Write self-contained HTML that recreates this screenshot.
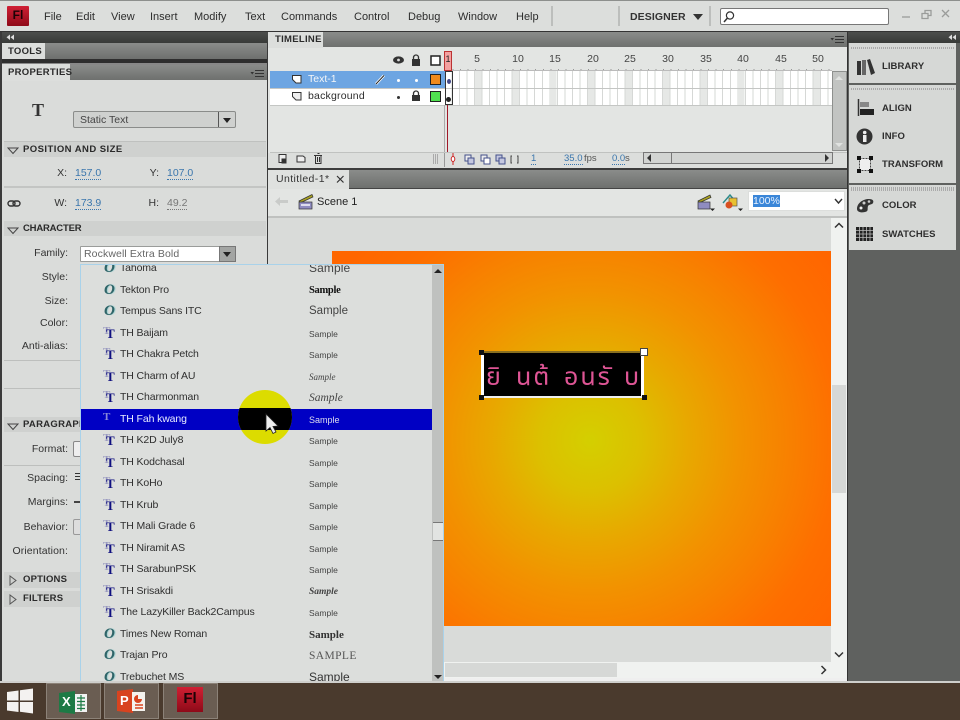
<!DOCTYPE html>
<html><head><meta charset="utf-8"><style>
*{box-sizing:border-box}
html,body{margin:0;padding:0;width:960px;height:720px;overflow:hidden;background:#dcdedc}
body{position:relative;font:10.5px "Liberation Sans","DejaVu Sans",sans-serif;color:#333;filter:blur(.3px)}
.a{position:absolute;white-space:nowrap}
.m{top:10px;font-size:11px;color:#2d2d2d;line-height:14px}
.hd{background:linear-gradient(#8a8c8a,#6e706e)}
.tab{background:#dcdedc;font-weight:bold;font-size:9.5px;color:#2b2b2b;line-height:17px;letter-spacing:.3px}
.sec{left:4px;width:262px;background:#cfd1cf;font-weight:bold;font-size:9.5px;color:#2a2a2a;line-height:16px;height:16px;padding-left:19px;letter-spacing:.2px}
.lab{font-size:10.5px;color:#333;text-align:right;line-height:14px}
.blue{color:#3a76ad;border-bottom:1px dotted #3a76ad;line-height:12px;font-size:10.5px}
.num{top:53px;font-size:10.5px;color:#444;width:20px;text-align:center;line-height:13px}
.rp{left:882px;font-weight:bold;font-size:9.5px;color:#2e2e2e;line-height:12px;letter-spacing:.05px}
.th{position:absolute;top:9px;line-height:32px;font-family:'Noto Sans Thai','Loma','Norasi','Garuda','DejaVu Sans','Liberation Sans',sans-serif;font-size:25px;color:#de5595;letter-spacing:2px}
#dd{left:80px;top:264px;width:364px;height:418px;background:#dcdedc;border:1px solid #a9d2ea;overflow:hidden}
.r{position:absolute;left:0;width:351px;height:21.5px;color:#2f2f2f;font-size:10.5px}
.r .n{position:absolute;left:39px;top:3px;line-height:15px;letter-spacing:-.12px}
.r .s{position:absolute;left:228px;top:4px;line-height:14px;font-size:8.5px;color:#444}
.r .o{position:absolute;left:23px;top:2px;font:italic bold 15px "Liberation Serif",serif;color:#2f6468;line-height:16px;text-shadow:1px 0 1px #9cc}
.r .t1{position:absolute;left:22px;top:2px;font:bold 11px "Liberation Serif",serif;color:#9a9ac0;line-height:13px}
.r .t2{position:absolute;left:25px;top:4px;font:bold 13px "Liberation Serif",serif;color:#101080;line-height:14px}
</style></head><body>

<!-- top bar -->
<div class="a" style="left:0;top:0;width:960px;height:1px;background:#8d8f8d"></div>
<div class="a" style="left:7px;top:6px;width:22px;height:20px;background:linear-gradient(#d02035,#8e0a18);border-radius:1px;color:#1c0206;font-weight:bold;font-size:12px;line-height:19px;text-align:center">Fl</div>
<div class="a m" style="left:44px">File</div>
<div class="a m" style="left:76px">Edit</div>
<div class="a m" style="left:111px">View</div>
<div class="a m" style="left:150px">Insert</div>
<div class="a m" style="left:194px">Modify</div>
<div class="a m" style="left:245px">Text</div>
<div class="a m" style="left:281px">Commands</div>
<div class="a m" style="left:354px">Control</div>
<div class="a m" style="left:408px">Debug</div>
<div class="a m" style="left:458px">Window</div>
<div class="a m" style="left:516px">Help</div>
<div class="a" style="left:551px;top:6px;width:2px;height:20px;background:#bcbebc"></div>
<div class="a" style="left:618px;top:6px;width:2px;height:20px;background:#bcbebc"></div>
<div class="a" style="left:630px;top:10px;font-size:10.5px;font-weight:bold;color:#333;line-height:14px;letter-spacing:.1px">DESIGNER</div>
<div class="a" style="left:693px;top:14px;border:5px solid transparent;border-top:6px solid #333;border-bottom:0"></div>
<div class="a" style="left:709px;top:6px;width:2px;height:20px;background:#bcbebc"></div>
<div class="a" style="left:720px;top:8px;width:169px;height:17px;background:#fff;border:1px solid #777;border-radius:2px"></div>
<svg class="a" style="left:722px;top:10px" width="14" height="14"><circle cx="8" cy="5.5" r="3.6" fill="none" stroke="#333" stroke-width="1.2"/><path d="M5.5 8L2 12" stroke="#333" stroke-width="1.5"/></svg>
<svg class="a" style="left:900px;top:8px" width="50" height="14" fill="none" stroke="#9a9c9a" stroke-width="1.3"><path d="M2 9H10"/><path d="M22 5.5h6v5h-6zM25 5V2.5h6v5h-3"/><path d="M42 2L49 9M49 2L42 9"/></svg>
<div class="a" style="left:0;top:31px;width:960px;height:1px;background:#333"></div>

<!-- left panel -->
<div class="a" style="left:0;top:32px;width:268px;height:650px;background:#dadcda"></div>
<div class="a" style="left:0;top:32px;width:2px;height:650px;background:#3a3a3a"></div>
<div class="a" style="left:267px;top:32px;width:1px;height:650px;background:#3a3a3a"></div>
<div class="a" style="left:2px;top:32px;width:266px;height:11px;background:linear-gradient(#4c4e4c,#383a38)"></div>
<svg class="a" style="left:6px;top:34px" width="8" height="7" fill="#ddd"><path d="M4 0.5V6L0.5 3.2zM8 0.5V6L4.5 3.2z"/></svg>
<div class="a hd" style="left:2px;top:43px;width:265px;height:16px"></div>
<div class="a tab" style="left:2px;top:43px;width:43px;height:16px;padding-left:6px">TOOLS</div>
<div class="a" style="left:2px;top:59px;width:265px;height:4px;background:#2e2e2e"></div>
<div class="a hd" style="left:2px;top:65px;width:265px;height:15px"></div>
<div class="a" style="left:2px;top:63px;width:265px;height:2px;background:#888"></div>
<div class="a tab" style="left:2px;top:64px;width:68px;height:17px;padding-left:6px">PROPERTIES</div>
<svg class="a" style="left:250px;top:69px" width="15" height="9" fill="none" stroke="#333"><path d="M5 1.5H14M5 4.5H14M5 7.5H14" stroke-width="1"/><path d="M0.5 3H4L2.2 5.5z" fill="#333" stroke="none"/></svg>
<div class="a" style="left:32px;top:100px;font:bold 18px 'Liberation Serif',serif;color:#333;line-height:20px">T</div>
<div class="a" style="left:73px;top:111px;width:163px;height:17px;background:#cfd1cf;border:1px solid #8a8c8a;border-radius:2px;padding-left:6px;line-height:16px;font-size:10.5px;color:#444">Static Text</div>
<div class="a" style="left:218px;top:112px;width:1px;height:15px;background:#555"></div>
<div class="a" style="left:223px;top:118px;border:4px solid transparent;border-top:5px solid #222;border-bottom:0"></div>

<div class="a" style="left:4px;top:141px;width:262px;height:1px;background:#bfc1bf"></div>
<div class="a sec" style="top:142px;height:15px;line-height:15px;letter-spacing:.45px">POSITION AND SIZE</div>
<svg class="a" style="left:7px;top:147px" width="12" height="8" fill="none" stroke="#444"><path d="M1 1H11L6 6.5z"/></svg>
<div class="a lab" style="left:40px;top:166px;width:27px">X:</div>
<div class="a blue" style="left:75px;top:167px">157.0</div>
<div class="a lab" style="left:130px;top:166px;width:29px">Y:</div>
<div class="a blue" style="left:167px;top:167px">107.0</div>
<div class="a" style="left:4px;top:186px;width:262px;height:2px;background:#c3c5c3"></div>
<svg class="a" style="left:7px;top:199px" width="16" height="9" fill="none" stroke="#333" stroke-width="1.4"><rect x="1" y="2" width="7" height="5" rx="2.5"/><rect x="6" y="2" width="7" height="5" rx="2.5"/></svg>
<div class="a lab" style="left:40px;top:196px;width:27px">W:</div>
<div class="a blue" style="left:75px;top:197px">173.9</div>
<div class="a lab" style="left:130px;top:196px;width:29px">H:</div>
<div class="a" style="left:167px;top:197px;color:#777;border-bottom:1px dotted #777;line-height:12px;font-size:10.5px">49.2</div>
<div class="a sec" style="top:221px;height:15px;line-height:15px;letter-spacing:-.2px">CHARACTER</div>
<svg class="a" style="left:7px;top:227px" width="12" height="8" fill="none" stroke="#444"><path d="M1 1H11L6 6.5z"/></svg>
<div class="a lab" style="left:20px;top:246px;width:48px">Family:</div>
<div class="a" style="left:80px;top:246px;width:156px;height:16px;background:#fff;border:1px solid #9a9c9a;border-radius:1px;padding-left:3px;line-height:14px;color:#666;font-size:10.5px;letter-spacing:.1px">Rockwell Extra Bold</div>
<div class="a" style="left:219px;top:246px;width:17px;height:16px;background:#a3a5a3;border:1px solid #777"></div>
<div class="a" style="left:223px;top:252px;border:4px solid transparent;border-top:5px solid #222;border-bottom:0"></div>
<div class="a lab" style="left:20px;top:270px;width:48px">Style:</div>
<div class="a lab" style="left:20px;top:294px;width:48px">Size:</div>
<div class="a lab" style="left:20px;top:316px;width:48px">Color:</div>
<div class="a lab" style="left:10px;top:339px;width:58px">Anti-alias:</div>
<div class="a" style="left:4px;top:360px;width:76px;height:1px;background:#bdbfbd"></div>
<div class="a" style="left:4px;top:388px;width:76px;height:1px;background:#bdbfbd"></div>
<div class="a sec" style="top:417px;width:76px;height:15px;line-height:15px;overflow:hidden;letter-spacing:.3px">PARAGRAPH</div>
<svg class="a" style="left:7px;top:423px" width="12" height="8" fill="none" stroke="#444"><path d="M1 1H11L6 6.5z"/></svg>
<div class="a lab" style="left:20px;top:442px;width:48px">Format:</div>
<div class="a" style="left:73px;top:441px;width:10px;height:16px;background:#eee;border:1px solid #888;border-radius:2px"></div>
<div class="a" style="left:4px;top:465px;width:76px;height:1px;background:#bdbfbd"></div>
<div class="a lab" style="left:20px;top:471px;width:48px">Spacing:</div>
<div class="a" style="left:75px;top:473px;width:5px;height:7px;background:repeating-linear-gradient(#333 0 1px,transparent 1px 3px)"></div>
<div class="a lab" style="left:20px;top:495px;width:48px">Margins:</div>
<div class="a" style="left:74px;top:501px;width:6px;height:2px;background:#444"></div>
<div class="a lab" style="left:15px;top:520px;width:53px">Behavior:</div>
<div class="a" style="left:73px;top:519px;width:10px;height:16px;background:#ddd;border:1px solid #999;border-radius:2px"></div>
<div class="a lab" style="left:6px;top:544px;width:62px;letter-spacing:.1px">Orientation:</div>
<div class="a sec" style="top:572px;width:76px;height:16px;line-height:16px">OPTIONS</div>
<svg class="a" style="left:9px;top:575px" width="9" height="12" fill="none" stroke="#555"><path d="M1 1V10L7 5.5z"/></svg>
<div class="a sec" style="top:591px;width:76px;height:16px;line-height:16px">FILTERS</div>
<svg class="a" style="left:9px;top:594px" width="9" height="12" fill="none" stroke="#555"><path d="M1 1V10L7 5.5z"/></svg>

<!-- timeline -->
<div class="a" style="left:268px;top:32px;width:580px;height:137px;background:#e3e5e3"></div>
<div class="a hd" style="left:268px;top:32px;width:579px;height:15px"></div>
<div class="a tab" style="left:268px;top:32px;width:55px;height:16px;padding-left:7px;line-height:16px">TIMELINE</div>
<svg class="a" style="left:830px;top:35px" width="15" height="9" fill="none" stroke="#333"><path d="M5 1.5H14M5 4.5H14M5 7.5H14"/><path d="M0.5 3H4L2.2 5.5z" fill="#333" stroke="none"/></svg>
<div class="a" style="left:270px;top:71px;width:175px;height:17px;background:#6da5e2"></div>
<div class="a" style="left:270px;top:88px;width:175px;height:17px;background:#fff"></div>
<div class="a" style="left:270px;top:88px;width:562px;height:1px;background:#c4c6c4"></div>
<div class="a" style="left:270px;top:105px;width:562px;height:1px;background:#c4c6c4"></div>
<div class="a" style="left:445px;top:71px;width:387px;height:34px;background:repeating-linear-gradient(90deg,#fff 0,#fff 6.52px,#d6d8d6 6.52px,#d6d8d6 7.52px)"></div>
<div class="a" style="left:475px;top:71px;width:357px;height:34px;background:repeating-linear-gradient(90deg,#e6e8e6 0,#e6e8e6 6.5px,transparent 6.5px,transparent 37.6px)"></div>
<div class="a" style="left:445px;top:88px;width:387px;height:1px;background:#c4c6c4"></div>
<div class="a" style="left:445px;top:69px;width:387px;height:2px;background:repeating-linear-gradient(90deg,#999 0,#999 1px,transparent 1px,transparent 7.52px)"></div>
<div class="a" style="left:445px;top:70px;width:387px;height:1px;background:#bbb"></div>
<svg class="a" style="left:392px;top:54px" width="50" height="13"><ellipse cx="6.5" cy="6" rx="5.5" ry="3.6" fill="#333"/><circle cx="6.5" cy="6" r="1.4" fill="#ddd"/><rect x="20" y="5" width="8" height="7" fill="#333"/><path d="M21.5 5V3.5a2.5 2.5 0 015 0V5" fill="none" stroke="#333" stroke-width="1.3"/><rect x="39" y="2" width="9" height="9" fill="#fff" stroke="#222" stroke-width="1.5"/></svg>
<div class="a" style="left:444px;top:51px;width:8px;height:20px;background:#f4a0a0;border:1px solid #b33;color:#222;font-size:9px;line-height:14px;text-align:center">1</div>
<div class="a num" style="left:467px">5</div><div class="a num" style="left:508px">10</div><div class="a num" style="left:545px">15</div><div class="a num" style="left:583px">20</div><div class="a num" style="left:620px">25</div><div class="a num" style="left:658px">30</div><div class="a num" style="left:696px">35</div><div class="a num" style="left:733px">40</div><div class="a num" style="left:771px">45</div><div class="a num" style="left:808px">50</div>
<svg class="a" style="left:291px;top:73px" width="12" height="12"><path d="M1.5 2.5H10V10H5L1.5 6.5z" fill="#fff" stroke="#333"/></svg>
<div class="a" style="left:308px;top:72px;color:#f4f6f8;font-size:10.5px;line-height:15px">Text-1</div>
<svg class="a" style="left:374px;top:73px" width="13" height="13"><path d="M2 11L10 2.5" stroke="#fff" stroke-width="2.6"/><path d="M2 11L10 2.5" stroke="#222" stroke-width="1"/></svg>
<div class="a" style="left:397px;top:79px;width:3px;height:3px;background:#fff;border-radius:50%"></div>
<div class="a" style="left:415px;top:79px;width:3px;height:3px;background:#fff;border-radius:50%"></div>
<div class="a" style="left:430px;top:74px;width:11px;height:11px;background:#f08a1c;border:1.5px solid #222"></div>
<svg class="a" style="left:291px;top:90px" width="12" height="12"><path d="M1.5 2.5H10V10H5L1.5 6.5z" fill="#eee" stroke="#333"/></svg>
<div class="a" style="left:308px;top:89px;color:#2d2d2d;font-size:10.5px;line-height:15px;letter-spacing:.2px">background</div>
<div class="a" style="left:397px;top:96px;width:3px;height:3px;background:#333;border-radius:50%"></div>
<svg class="a" style="left:411px;top:90px" width="11" height="12"><rect x="1" y="5" width="8" height="6" fill="#333"/><path d="M2.5 5V3.5a2.5 2.5 0 015 0V5" fill="none" stroke="#333" stroke-width="1.3"/></svg>
<div class="a" style="left:430px;top:91px;width:11px;height:11px;background:#50e050;border:1.5px solid #222"></div>
<div class="a" style="left:445px;top:71px;width:8px;height:34px;border:1px solid #333"></div>
<div class="a" style="left:447px;top:79px;width:4px;height:5px;background:#444a88;border-radius:50%"></div>
<div class="a" style="left:446px;top:97px;width:5px;height:5px;background:#222;border-radius:50%"></div>
<div class="a" style="left:447px;top:105px;width:1px;height:48px;background:#a01828"></div>
<div class="a" style="left:444px;top:105px;width:1px;height:48px;background:#aaa"></div>

<div class="a" style="left:832px;top:71px;width:15px;height:80px;background:#c2c4c2;border:1px solid #8e908e"></div>
<div class="a" style="left:835px;top:76px;border:4px solid transparent;border-bottom:4px solid #e0e2e0;border-top:0"></div>
<div class="a" style="left:835px;top:143px;border:4px solid transparent;border-top:4px solid #e0e2e0;border-bottom:0"></div>
<div class="a" style="left:270px;top:152px;width:578px;height:1px;background:#c0c2c0"></div>
<div class="a" style="left:268px;top:153px;width:580px;height:15px;background:#dcdedc"></div>
<svg class="a" style="left:277px;top:152px" width="50" height="14" fill="none" stroke="#333"><rect x="2" y="2.5" width="7" height="8" fill="#eee"/><rect x="5" y="7" width="4" height="4" fill="#333"/><path d="M20 4H26L28 5.5V10H20z" fill="#eee"/><path d="M37 3.5H45M38.5 3.5V11.5H44V3.5M40.5 1.5H42.5M40.5 5V10M42.5 5V10"/></svg>
<div class="a" style="left:433px;top:154px;width:6px;height:10px;background:repeating-linear-gradient(90deg,#aaa 0 1px,transparent 1px 2px)"></div>
<div class="a" style="left:444px;top:153px;width:1px;height:14px;background:#999"></div>
<svg class="a" style="left:449px;top:153px" width="70" height="13"><path d="M4 0V12" stroke="#c22"/><ellipse cx="4" cy="6" rx="1.8" ry="2.5" fill="#fff" stroke="#c22"/><g fill="#c5c8e0" stroke="#44508a"><rect x="16" y="2" width="6" height="6" fill="#eee"/><rect x="19" y="5" width="6" height="6"/><rect x="32" y="2" width="6" height="6" fill="#eee"/><rect x="35" y="5" width="6" height="6" fill="#fff"/><rect x="47" y="2" width="6" height="6"/><rect x="50" y="5" width="6" height="6"/></g><path d="M63 3H62V10H63M68 3H69V10H68" fill="none" stroke="#444"/></svg>
<div class="a blue" style="left:531px;top:153px;font-size:9.5px;line-height:11px">1</div>
<div class="a blue" style="left:564px;top:153px;font-size:9.5px;line-height:11px">35.0</div><div class="a" style="left:584px;top:153px;font-size:9.5px;line-height:12px;color:#555">fps</div>
<div class="a blue" style="left:612px;top:153px;font-size:9.5px;line-height:11px">0.0</div><div class="a" style="left:625px;top:153px;font-size:9.5px;line-height:12px;color:#555">s</div>
<div class="a" style="left:643px;top:152px;width:190px;height:12px;background:#d2d4d2;border:1px solid #777"></div>
<div class="a" style="left:671px;top:153px;width:1px;height:10px;background:#777"></div>
<div class="a" style="left:647px;top:154px;border:4px solid transparent;border-right:4px solid #333;border-left:0"></div>
<div class="a" style="left:825px;top:154px;border:4px solid transparent;border-left:4px solid #333;border-right:0"></div>

<!-- document area -->
<div class="a" style="left:268px;top:168px;width:580px;height:2px;background:#3c3c3c"></div>
<div class="a hd" style="left:268px;top:170px;width:579px;height:18px"></div>
<div class="a" style="left:268px;top:170px;width:81px;height:19px;background:#dfe1df;font-size:10.5px;line-height:19px;padding-left:8px;color:#333;letter-spacing:.4px">Untitled-1*</div>
<svg class="a" style="left:336px;top:175px" width="9" height="9" stroke="#333" stroke-width="1.2"><path d="M1 1L7.5 7.5M7.5 1L1 7.5"/></svg>
<div class="a" style="left:349px;top:188px;width:499px;height:1px;background:#444"></div>
<div class="a" style="left:268px;top:189px;width:580px;height:27px;background:#e3e5e3"></div>
<div class="a" style="left:268px;top:216px;width:580px;height:2px;background:#bfc1bf"></div>
<div class="a" style="left:268px;top:218px;width:564px;height:444px;background:#d9dbd9"></div>
<svg class="a" style="left:275px;top:196px" width="14" height="11" fill="#c9cbc9"><path d="M0 5.5L5 1V4H13V7H5V10z"/></svg>
<svg class="a" style="left:298px;top:193px" width="16" height="17"><path d="M1 8L14 1.5L15 4L2 10z" fill="#a8a020" stroke="#333" stroke-width=".7"/><rect x="1" y="9" width="13" height="7" fill="#8f8cc0" stroke="#333" stroke-width=".7"/><rect x="3" y="11" width="9" height="2" fill="#dde"/></svg>
<div class="a" style="left:317px;top:195px;font-size:11px;line-height:14px;color:#222">Scene 1</div>
<svg class="a" style="left:696px;top:193px" width="20" height="19"><path d="M2 8L14 2L15 4.5L3 10z" fill="#a8a020" stroke="#333" stroke-width=".7"/><rect x="2" y="9" width="12" height="7" fill="#8f8cc0" stroke="#333" stroke-width=".7"/><path d="M14 15.5h5L16.500 18z" fill="#222"/></svg>
<svg class="a" style="left:722px;top:193px" width="22" height="19"><path d="M1 10L8 2L13 8" fill="none" stroke="#2a8a8a" stroke-width="1.4"/><rect x="7" y="5" width="8" height="8" fill="#e8c030" stroke="#555" stroke-width=".7"/><circle cx="7" cy="12" r="3.5" fill="#d85020"/><path d="M16 15.500h5L18.500 18z" fill="#222"/></svg>
<div class="a" style="left:748px;top:191px;width:97px;height:20px;background:#fff;border:1px solid #dcdedc"></div>
<div class="a" style="left:753px;top:195px;width:27px;height:12px;background:#3a86d8;color:#e8f2ff;font-size:10.5px;line-height:12px">100%</div>
<svg class="a" style="left:834px;top:198px" width="9" height="7" fill="none" stroke="#333" stroke-width="1.4"><path d="M1 1L4.500 5L8 1"/></svg>

<div class="a" style="left:332px;top:251px;width:499px;height:375px;background:radial-gradient(circle 300px at 258px 189px,#d4cf00 0,#dcc000 17%,#e8a800 33%,#f29200 50%,#f88000 67%,#fe6e00 83%,#ff6600 100%)"></div>
<div class="a" style="left:831px;top:218px;width:16px;height:462px;background:#f0f2f0"></div>
<div class="a" style="left:832px;top:385px;width:14px;height:108px;background:#d6d8d6"></div>
<svg class="a" style="left:834px;top:222px" width="10" height="7" fill="none" stroke="#333" stroke-width="1.5"><path d="M1 5.500L5 1.500L9 5.500"/></svg>
<svg class="a" style="left:834px;top:651px" width="10" height="7" fill="none" stroke="#333" stroke-width="1.5"><path d="M1 1.500L5 5.500L9 1.500"/></svg>
<div class="a" style="left:268px;top:662px;width:564px;height:16px;background:#f0f2f0"></div>
<div class="a" style="left:445px;top:663px;width:172px;height:14px;background:#d6d8d6"></div>
<svg class="a" style="left:820px;top:665px" width="7" height="10" fill="none" stroke="#333" stroke-width="1.5"><path d="M1.500 1L5.500 5L1.500 9"/></svg>
<div class="a" style="left:268px;top:678px;width:580px;height:3px;background:#efefef"></div>

<!-- text box -->
<div class="a" style="left:484px;top:353px;width:158px;height:43px;background:#000;overflow:hidden">
<span class="th" style="left:2px">ยิ</span><span class="th" style="left:32px">นต้</span><span class="th" style="left:80px">อนรั</span><span class="th" style="left:140px">บ</span>
</div>
<div class="a" style="left:481px;top:352px;width:3px;height:45px;background:#fff"></div>
<div class="a" style="left:641px;top:352px;width:3px;height:45px;background:#fff"></div>
<div class="a" style="left:481px;top:351px;width:164px;height:2px;background:#8a7020"></div>
<div class="a" style="left:481px;top:396px;width:164px;height:2px;background:#eee"></div>
<div class="a" style="left:479px;top:350px;width:5px;height:5px;background:#111"></div>
<div class="a" style="left:479px;top:395px;width:5px;height:5px;background:#111"></div>
<div class="a" style="left:642px;top:395px;width:5px;height:5px;background:#111"></div>
<div class="a" style="left:640px;top:348px;width:8px;height:8px;background:#fff;border:1px solid #444"></div>

<!-- right panel -->
<div class="a" style="left:847px;top:32px;width:1px;height:650px;background:#333"></div>
<div class="a" style="left:848px;top:32px;width:112px;height:650px;background:#5f615f"></div>
<div class="a" style="left:848px;top:32px;width:112px;height:11px;background:linear-gradient(#4c4e4c,#383a38)"></div>
<svg class="a" style="left:948px;top:34px" width="8" height="7" fill="#ddd"><path d="M4 0.500V6L.5 3.200zM8 .5V6L4.500 3.200z"/></svg>
<div class="a" style="left:849px;top:43px;width:107px;height:40px;background:#d6d8d6"></div>
<div class="a" style="left:849px;top:85px;width:107px;height:98px;background:#d6d8d6"></div>
<div class="a" style="left:849px;top:185px;width:107px;height:65px;background:#d6d8d6"></div>
<div class="a" style="left:851px;top:47px;width:103px;height:2px;background:repeating-linear-gradient(90deg,#aaa 0 1px,transparent 1px 2px)"></div>
<div class="a" style="left:851px;top:88px;width:103px;height:2px;background:repeating-linear-gradient(90deg,#aaa 0 1px,transparent 1px 2px)"></div>
<div class="a" style="left:851px;top:187px;width:103px;height:4px;background:repeating-linear-gradient(90deg,#aaa 0 1px,transparent 1px 2px)"></div>
<svg class="a" style="left:856px;top:58px" width="20" height="18"><rect x="1" y="3" width="4" height="14" fill="#333"/><rect x="6" y="2" width="4" height="15" fill="#666"/><path d="M11 2L14 1L19 15L15 17z" fill="#333"/></svg>
<div class="a rp" style="top:61px">LIBRARY</div>
<svg class="a" style="left:857px;top:98px" width="18" height="19"><path d="M1.500 1V18" stroke="#333" stroke-width="1.5"/><rect x="3" y="4" width="9" height="5" fill="#888"/><rect x="3" y="11" width="14" height="6" fill="#222"/></svg>
<div class="a rp" style="top:103px">ALIGN</div>
<svg class="a" style="left:856px;top:128px" width="17" height="17"><circle cx="8.500" cy="8.500" r="8" fill="#333"/><rect x="7" y="7" width="3.500" height="7" fill="#eee"/><circle cx="8.700" cy="4.500" r="1.800" fill="#eee"/></svg>
<div class="a rp" style="top:131px">INFO</div>
<svg class="a" style="left:857px;top:156px" width="16" height="17"><rect x="2.500" y="2.500" width="11" height="12" fill="#eee" stroke="#444" stroke-dasharray="2 1"/><g fill="#111"><rect x="0" y="0" width="4" height="4"/><rect x="12" y="0" width="4" height="4"/><rect x="0" y="13" width="4" height="4"/><rect x="12" y="13" width="4" height="4"/></g></svg>
<div class="a rp" style="top:159px">TRANSFORM</div>
<svg class="a" style="left:856px;top:198px" width="18" height="15"><path d="M1 11C1 5 7 1 13 1c4 0 5 2 4 4-1 2-4 1-5 3-1 3 1 5-3 6-4 1-8 0-8-3z" fill="#333"/><circle cx="5" cy="10" r="1.500" fill="#eee"/><circle cx="8" cy="5" r="1.500" fill="#ccc"/><circle cx="13" cy="3.500" r="1.300" fill="#ccc"/></svg>
<div class="a rp" style="top:200px">COLOR</div>
<svg class="a" style="left:856px;top:227px" width="17" height="14"><rect width="17" height="14" fill="#222"/><path d="M3.500 0V14M7 0V14M10.500 0V14M14 0V14M0 3.500H17M0 7H17M0 10.500H17" stroke="#bbb" stroke-width=".8"/></svg>
<div class="a rp" style="top:229px">SWATCHES</div>

<!-- dropdown -->
<div class="a" id="dd">
<div class="r" style="top:-7px"><span class="o">O</span><span class="n">Tahoma</span><span class="s" style="font-size:12px;top:3px;letter-spacing:.1px">Sample</span></div>
<div class="r" style="top:14.500px"><span class="o">O</span><span class="n">Tekton Pro</span><span class="s" style="font:bold 10.500px 'Liberation Serif',serif;line-height:14px;color:#111;letter-spacing:-.3px">Sample</span></div>
<div class="r" style="top:36px"><span class="o">O</span><span class="n">Tempus Sans ITC</span><span class="s" style="font-size:11.500px;top:3px;color:#444">Sample</span></div>
<div class="r" style="top:57.500px"><span class="t1">T</span><span class="t2">T</span><span class="n">TH Baijam</span><span class="s">Sample</span></div>
<div class="r" style="top:79px"><span class="t1">T</span><span class="t2">T</span><span class="n">TH Chakra Petch</span><span class="s">Sample</span></div>
<div class="r" style="top:100.500px"><span class="t1">T</span><span class="t2">T</span><span class="n">TH Charm of AU</span><span class="s" style="font:italic 9px 'Liberation Serif',serif;line-height:14px">Sample</span></div>
<div class="r" style="top:122px"><span class="t1">T</span><span class="t2">T</span><span class="n">TH Charmonman</span><span class="s" style="font:italic 11.500px 'Liberation Serif',serif;line-height:14px">Sample</span></div>
<div class="r" style="top:143.500px;background:#0000c4;color:#fff"><span class="t1" style="color:#8a8ad8">T</span><span class="n" style="color:#e8ecff">TH Fah kwang</span><span class="s" style="color:#dde;font-size:9px;top:4px">Sample</span></div>
<div class="r" style="top:165px"><span class="t1">T</span><span class="t2">T</span><span class="n">TH K2D July8</span><span class="s">Sample</span></div>
<div class="r" style="top:186.500px"><span class="t1">T</span><span class="t2">T</span><span class="n">TH Kodchasal</span><span class="s">Sample</span></div>
<div class="r" style="top:208px"><span class="t1">T</span><span class="t2">T</span><span class="n">TH KoHo</span><span class="s">Sample</span></div>
<div class="r" style="top:229.500px"><span class="t1">T</span><span class="t2">T</span><span class="n">TH Krub</span><span class="s">Sample</span></div>
<div class="r" style="top:251px"><span class="t1">T</span><span class="t2">T</span><span class="n">TH Mali Grade 6</span><span class="s">Sample</span></div>
<div class="r" style="top:272.500px"><span class="t1">T</span><span class="t2">T</span><span class="n">TH Niramit AS</span><span class="s">Sample</span></div>
<div class="r" style="top:294px"><span class="t1">T</span><span class="t2">T</span><span class="n">TH SarabunPSK</span><span class="s">Sample</span></div>
<div class="r" style="top:315.500px"><span class="t1">T</span><span class="t2">T</span><span class="n">TH Srisakdi</span><span class="s" style="font:italic bold 9.500px 'Liberation Serif',serif;line-height:15px">Sample</span></div>
<div class="r" style="top:337px"><span class="t1">T</span><span class="t2">T</span><span class="n">The LazyKiller Back2Campus</span><span class="s">Sample</span></div>
<div class="r" style="top:358.500px"><span class="o">O</span><span class="n">Times New Roman</span><span class="s" style="font:bold 11px 'Liberation Serif',serif;line-height:14px;color:#333">Sample</span></div>
<div class="r" style="top:380px"><span class="o">O</span><span class="n">Trajan Pro</span><span class="s" style="font:11.500px 'Liberation Serif',serif;line-height:14px;color:#555;letter-spacing:.4px">SAMPLE</span></div>
<div class="r" style="top:401.500px"><span class="o">O</span><span class="n">Trebuchet MS</span><span class="s" style="font-size:12px;top:3px;color:#333">Sample</span></div>
<div class="a" style="left:351px;top:0;width:12px;height:416px;background:#bfc1bf"></div>
<div class="a" style="left:352px;top:257px;width:11px;height:19px;background:#e2e4e2;border-top:1px solid #777;border-bottom:1px solid #777"></div>
<div class="a" style="left:353px;top:4px;border:4px solid transparent;border-bottom:4px solid #222;border-top:0"></div>
<div class="a" style="left:353px;top:410px;border:4px solid transparent;border-top:4px solid #222;border-bottom:0"></div>
</div>

<!-- yellow pointer highlight -->
<svg class="a" style="left:236px;top:388px" width="58" height="58">
<defs><clipPath id="c1"><rect x="0" y="20" width="58" height="22"/></clipPath></defs>
<circle cx="29" cy="29" r="27" fill="#dcdc00"/>
<circle cx="29" cy="29" r="27" fill="#000" clip-path="url(#c1)"/>
<path d="M30 26V43L34 39.500L37 45.500L40 44L37 38.500L42 38z" fill="#eee" stroke="#222" stroke-width=".8"/>
</svg>

<!-- taskbar -->
<div class="a" style="left:0;top:681px;width:960px;height:2px;background:#cfcfcc"></div>
<div class="a" style="left:0;top:683px;width:960px;height:37px;background:#4a3a2d"></div>
<svg class="a" style="left:7px;top:688px" width="27" height="26" fill="#f4f2f0"><path d="M0 4L11.500 2.500V12.500H0zM13 2.300L26 .5V12.500H13zM0 14H11.500V24L0 22.500zM13 14H26V25.500L13 23.800z"/></svg>
<div class="a" style="left:46px;top:683px;width:55px;height:36px;background:#6a5d52;border:1px solid #8c8278"></div>
<div class="a" style="left:104px;top:683px;width:55px;height:36px;background:#6a5d52;border:1px solid #8c8278"></div>
<div class="a" style="left:163px;top:683px;width:55px;height:36px;background:#6a5d52;border:1px solid #8c8278"></div>
<svg class="a" style="left:59px;top:691px" width="29" height="23"><path d="M0 2L16 0V23L0 21z" fill="#1d7a45"/><rect x="16" y="3" width="12" height="18" fill="#f2f2f2"/><path d="M18 7H26M18 10.500H26M18 14H26M18 17.500H26M22 4V20" stroke="#1d7a45" stroke-width="1.200"/></svg>
<div class="a" style="left:62px;top:694px;color:#fff;font-weight:bold;font-size:13px;line-height:16px">X</div>
<svg class="a" style="left:117px;top:689px" width="29" height="24"><path d="M0 2L16 0V24L0 22z" fill="#d8431f"/><rect x="15" y="3" width="13" height="19" fill="#f4f2ee"/><path d="M18 16H26M18 19H26" stroke="#d8431f" stroke-width="1.400"/><path d="M21 6a4 4 0 104 4h-4z" fill="#d8431f"/></svg>
<div class="a" style="left:120px;top:693px;color:#fff;font-weight:bold;font-size:13px;line-height:16px">P</div>
<div class="a" style="left:177px;top:687px;width:26px;height:25px;background:linear-gradient(#d01f33,#8e0a18);color:#1c0206;font-weight:bold;font-size:15px;line-height:24px;text-align:center">Fl</div>
</body></html>
